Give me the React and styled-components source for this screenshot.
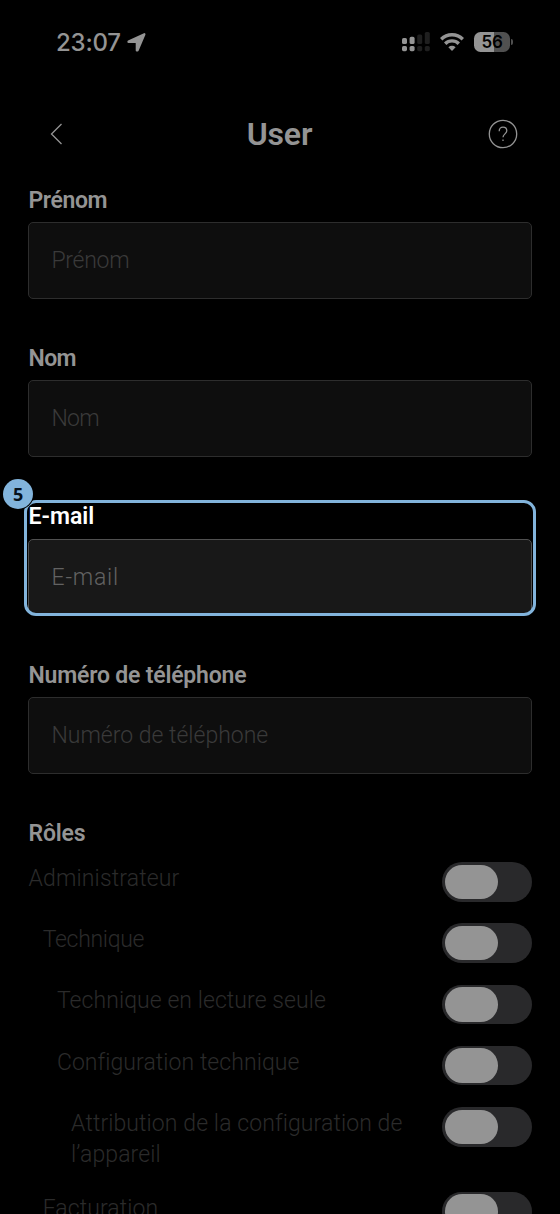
import React from "react";
import styled, { createGlobalStyle } from "styled-components";

const GlobalStyle = createGlobalStyle`
  * {
    box-sizing: border-box;
  }

  body {
    margin: 0;
    background: #000;
    font-family: Roboto, "Liberation Sans", sans-serif;
    -webkit-font-smoothing: antialiased;
  }
`;

const Screen = styled.div`
  width: 560px;
  height: 1214px;
  overflow: hidden;
  background: #000;
  color: #949494;
`;

const StatusBar = styled.div`
  display: flex;
  align-items: center;
  height: 84px;
  padding: 0 48px 0 56px;
`;

const Clock = styled.div`
  font-family: Inter, sans-serif;
  font-size: 24px;
  font-weight: 500;
  letter-spacing: -0.2px;
  margin-right: 6px;
`;

const Indicators = styled.div`
  display: flex;
  align-items: center;
  margin-left: auto;
`;

const Signal = styled.svg`
  margin-right: 10.5px;
`;

const Wifi = styled.svg`
  margin-right: 10px;
`;

const Battery = styled.div`
  width: 36px;
  height: 20px;
  border-radius: 6.5px;
  background: linear-gradient(to right, #949494 56%, #505050 56%);
  color: #000;
  font: 600 17px/20px Inter, sans-serif;
  letter-spacing: -0.4px;
  text-align: center;
`;

const BatteryTip = styled.div`
  width: 2px;
  height: 6px;
  margin: 0 -1px 0 1px;
  border-radius: 0 2px 2px 0;
  background: #505050;
`;

const Header = styled.div`
  display: flex;
  align-items: center;
  justify-content: space-between;
  height: 100px;
  padding: 0 42px 0 49px;
`;

const Title = styled.h1`
  margin: 0 0 0 8px;
  font-size: 32px;
  font-weight: 600;
  line-height: 40px;
  letter-spacing: -0.2px;
`;

const Form = styled.div`
  padding: 0 28px;
`;

const Field = styled.div`
  position: relative;
  height: 158.2px;
`;

const Label = styled.div`
  height: 38.3px;
  padding-left: 0.5px;
  font-size: 23px;
  font-weight: 600;
  line-height: 33px;
  letter-spacing: ${props => props.$tracking}px;
  color: ${props => (props.$active ? "#fff" : "#949494")};
`;

const Input = styled.input`
  display: block;
  width: 504px;
  height: 76.7px;
  padding: 0 22.5px;
  border: 1.5px solid ${props => (props.$active ? "#505050" : "#2d2d2d")};
  border-radius: 5px;
  outline: none;
  background: ${props => (props.$active ? "#181818" : "#0e0e0e")};
  font: 300 23px Roboto, sans-serif;
  letter-spacing: ${props => props.$tracking}px;

  &::placeholder {
    color: ${props => (props.$active ? "#626262" : "#3a3a3a")};
    opacity: 1;
  }
`;

const Highlight = styled.div`
  position: absolute;
  top: 0;
  left: -3.6px;
  width: 512px;
  height: 116px;
  border: 3px solid #82b4dc;
  border-radius: 12px;
`;

const Badge = styled.div`
  position: absolute;
  top: -21.8px;
  left: -24.8px;
  width: 30px;
  height: 30px;
  border-radius: 50%;
  background: #82b4dc;
  box-shadow: 0 0 0 1px #000;
  color: #06121c;
  font: 700 18px/30px "Noto Sans", sans-serif;
  text-align: center;
`;

const Roles = styled.div`
  display: flex;
  flex-direction: column;
  gap: 21.75px;
  padding-top: 7px;
`;

const Role = styled.div`
  display: flex;
  align-items: flex-start;
  justify-content: space-between;
  padding-left: ${props => 0.5 + props.$level * 14.2}px;
`;

const RoleName = styled.div`
  margin-bottom: -0.8px;
  padding-top: 0.8px;
  color: #2b2b2b;
  font-size: 23px;
  font-weight: 300;
  line-height: 31.5px;
  letter-spacing: ${props => props.$tracking}px;
  white-space: pre-line;
`;

const Toggle = styled.div`
  flex: none;
  width: 90px;
  height: 39.5px;
  padding: 2.5px;
  border-radius: 20px;
  background: #29292b;
`;

const Knob = styled.div`
  width: 53px;
  height: 34.5px;
  border-radius: 17.25px;
  background: #949494;
`;

const fields = [
  { label: "Prénom", bold: -0.4, light: -0.3 },
  { label: "Nom", bold: -0.6, light: -0.8 },
  { label: "E-mail", bold: 0, light: 0.8, active: true },
  { label: "Numéro de téléphone", bold: -0.2, light: 0 }
];

const roles = [
  { name: "Administrateur", level: 0, tracking: 0.15 },
  { name: "Technique", level: 1, tracking: -0.3 },
  { name: "Technique en lecture seule", level: 2, tracking: 0.07 },
  { name: "Configuration technique", level: 2, tracking: 0.07 },
  { name: "Attribution de la configuration de\nl’appareil", level: 3, tracking: 0.1 },
  { name: "Facturation", level: 1, tracking: 0.1 }
];

const StatusIcons = () => (
  <Indicators>
    <Signal width="28" height="20" viewBox="0 0 28 20">
      <g fill="#949494">
        <rect x="0" y="6" width="5" height="6" rx="1.6" />
        <rect x="7.6" y="4.8" width="5" height="7.2" rx="1.6" />
        <rect x="0" y="14" width="5" height="5.2" rx="1.6" />
        <rect x="7.6" y="14" width="5" height="5.2" rx="1.6" />
      </g>
      <g fill="#1f1f1f">
        <rect x="15.2" y="2.4" width="5" height="9.6" rx="1.6" />
        <rect x="22.8" y="0" width="5" height="12" rx="1.6" />
        <rect x="15.2" y="14" width="5" height="5.2" rx="1.6" />
        <rect x="22.8" y="14" width="5" height="5.2" rx="1.6" />
      </g>
    </Signal>
    <Wifi width="24" height="18" viewBox="0 0 24 18">
      <g fill="none" stroke="#949494" strokeWidth="3.4">
        <path d="M1.2 6.2a15.4 15.4 0 0 1 21.6 0" />
        <path d="M5.2 10.7a9.7 9.7 0 0 1 13.6 0" />
      </g>
      <path fill="#949494" d="M12 18 8.4 14.3a5.2 5.2 0 0 1 7.2 0z" />
    </Wifi>
    <Battery>56</Battery>
    <BatteryTip />
  </Indicators>
);

export default () => (
  <>
    <GlobalStyle />
    <Screen>
      <StatusBar>
        <Clock>23:07</Clock>
        <svg width="19" height="19" viewBox="0 0 19 19">
          <path
            fill="#949494"
            stroke="#949494"
            strokeWidth="2.2"
            strokeLinejoin="round"
            d="M17.4 1.2 1.5 8.4v.6h8.3v8.4h.8z"
          />
        </svg>
        <StatusIcons />
      </StatusBar>
      <Header>
        <svg width="14" height="22" viewBox="0 0 14 22" fill="none" stroke="#949494" strokeWidth="1.3">
          <path d="M12.5 1 2.500 11l10 10" />
        </svg>
        <Title>User</Title>
        <svg width="30" height="30" viewBox="0 0 30 30" fill="none" stroke="#949494" strokeWidth="1.3">
          <circle cx="15" cy="15" r="13.7" />
          <path d="M11.2 12.2c0-2.5 1.6-4 3.8-4s3.8 1.5 3.8 3.600c0 3-3.8 3.200-3.8 6.500" />
          <path d="M15 20.5v1.6" />
        </svg>
      </Header>
      <Form>
        {fields.map(({ label, bold, light, active }) => (
          <Field key={label}>
            <Label $tracking={bold} $active={active}>{label}</Label>
            <Input placeholder={label} $tracking={light} $active={active} />
            {active && <Highlight />}
            {active && <Badge>5</Badge>}
          </Field>
        ))}
        <Label $tracking={-0.2}>Rôles</Label>
        <Roles>
          {roles.map(({ name, level, tracking }) => (
            <Role key={name} $level={level}>
              <RoleName $tracking={tracking}>{name}</RoleName>
              <Toggle>
                <Knob />
              </Toggle>
            </Role>
          ))}
        </Roles>
      </Form>
    </Screen>
  </>
);
